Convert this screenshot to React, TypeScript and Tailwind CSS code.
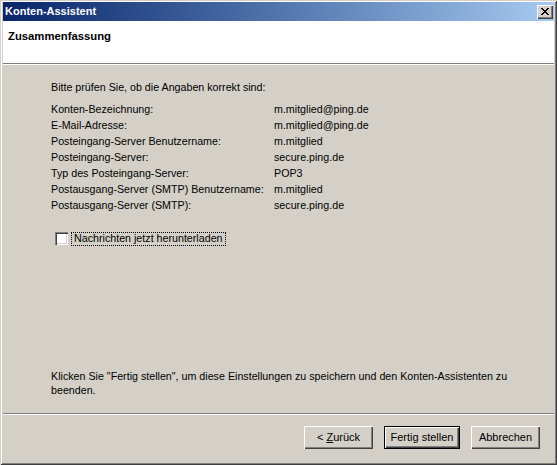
import React from 'react';

const font = { fontFamily: '"Liberation Sans", Arial, sans-serif' };

const rows: [string, string][] = [
  ['Konten-Bezeichnung:', 'm.mitglied@ping.de'],
  ['E-Mail-Adresse:', 'm.mitglied@ping.de'],
  ['Posteingang-Server Benutzername:', 'm.mitglied'],
  ['Posteingang-Server:', 'secure.ping.de'],
  ['Typ des Posteingang-Server:', 'POP3'],
  ['Postausgang-Server (SMTP) Benutzername:', 'm.mitglied'],
  ['Postausgang-Server (SMTP):', 'secure.ping.de'],
];

function WinButton({ children, width, isDefault }: { children: React.ReactNode; width: string; isDefault?: boolean }) {
  if (isDefault) {
    return (
      <div className={`${width} h-[23px] border border-black flex`}>
        <button className="flex-1 bg-[#d4d0c8] text-[11px] text-black shadow-[inset_1px_1px_#ffffff,inset_-1px_-1px_#404040,inset_-2px_-2px_#808080]">
          {children}
        </button>
      </div>
    );
  }
  return (
    <button className={`${width} h-[23px] bg-[#d4d0c8] text-[11px] text-black shadow-[inset_1px_1px_#ffffff,inset_-1px_-1px_#404040,inset_-2px_-2px_#808080]`}>
      {children}
    </button>
  );
}

export default function App() {
  return (
    <div
      style={font}
      className="w-[557px] h-[465px] bg-[#d4d0c8] flex flex-col pt-[2px] pl-[3px] pr-[3px] pb-[3px] shadow-[inset_1px_1px_#d4d0c8,inset_-1px_-1px_#404040,inset_2px_2px_#ffffff,inset_-2px_-2px_#808080] text-[11px] text-black"
    >
      {/* Title bar */}
      <div className="h-[19px] shrink-0 flex items-center justify-between bg-gradient-to-r from-[#0a246a] to-[#a6caf0] pl-[2px] pr-[1px]">
        <span className="text-white font-bold text-[11px] leading-none">Konten-Assistent</span>
        <button className="w-[16px] h-[14px] bg-[#d4d0c8] flex items-center justify-center shadow-[inset_1px_1px_#ffffff,inset_-1px_-1px_#404040,inset_-2px_-2px_#808080]">
          <svg width="8" height="7" viewBox="0 0 8 7" shapeRendering="crispEdges">
            <path
              d="M0 0h2v1H0zM6 0h2v1H6zM1 1h2v1H1zM5 1h2v1H5zM2 2h4v1H2zM3 3h2v1H3zM2 4h4v1H2zM1 5h2v1H1zM5 5h2v1H5zM0 6h2v1H0zM6 6h2v1H6z"
              fill="#000"
            />
          </svg>
        </button>
      </div>

      {/* Header */}
      <div className="h-[42px] shrink-0 bg-white pl-[5px] pt-[7px]">
        <div className="font-bold text-[11.3px] leading-[16px]">Zusammenfassung</div>
      </div>
      <div className="h-px bg-[#808080] shrink-0" />
      <div className="h-px bg-white shrink-0" />

      {/* Body */}
      <div className="flex-1 flex flex-col pl-[48px] pt-[14px] text-[10.7px]">
        <div className="leading-[16px]">Bitte prüfen Sie, ob die Angaben korrekt sind:</div>
        <div className="mt-[6px] flex flex-col">
          {rows.map(([label, value]) => (
            <div key={label} className="flex leading-[16px]">
              <span className="w-[223px] shrink-0">{label}</span>
              <span>{value}</span>
            </div>
          ))}
        </div>

        <div className="mt-[18px] flex items-center h-[15px] pl-[4px]">
          <div className="w-[13px] h-[13px] bg-white shadow-[inset_1px_1px_#808080,inset_2px_2px_#404040,inset_-1px_-1px_#ffffff,inset_-2px_-2px_#d4d0c8]" />
          <div className="ml-[3px] h-[14px] px-[2px] border border-dotted border-black flex items-center leading-none">
            Nachrichten jetzt herunterladen
          </div>
        </div>

        <div className="mt-auto pb-[16px] leading-[14px]">
          Klicken Sie "Fertig stellen", um diese Einstellungen zu speichern und den Konten-Assistenten zu
          <br />
          beenden.
        </div>
      </div>

      {/* Footer */}
      <div className="h-px bg-[#808080] shrink-0" />
      <div className="h-px bg-white shrink-0" />
      <div className="h-[47px] shrink-0 flex justify-end items-start pt-[11px] pr-[14px] gap-[11px]">
        <WinButton width="w-[69px]">
          &lt; <span className="underline">Z</span>urück
        </WinButton>
        <WinButton width="w-[76px]" isDefault>
          Fertig stellen
        </WinButton>
        <WinButton width="w-[69px]">Abbrechen</WinButton>
      </div>
    </div>
  );
}
